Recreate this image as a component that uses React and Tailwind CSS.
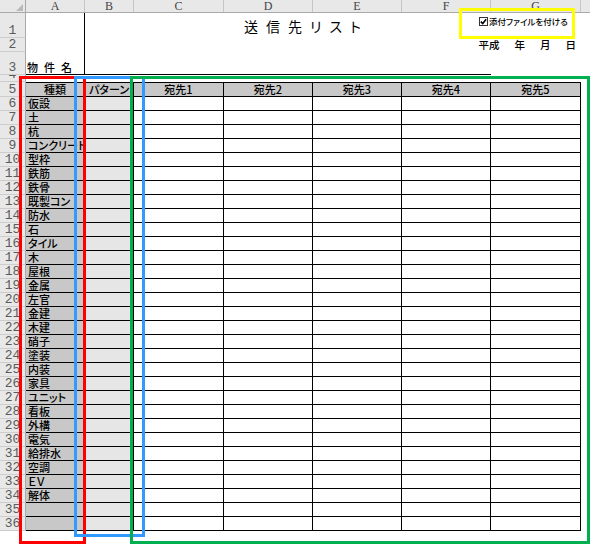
import React from "react";

const JP = "font-['Noto_Sans_CJK_JP',sans-serif] [font-feature-settings:'palt']";

const COLS = [
  { l: "A", w: "w-[59px]" },
  { l: "B", w: "w-[49px]" },
  { l: "C", w: "w-[90px]" },
  { l: "D", w: "w-[89px]" },
  { l: "E", w: "w-[89px]" },
  { l: "F", w: "w-[89px]" },
  { l: "G", w: "w-[90px]" },
];

const DEST = [
  { t: "宛先1", w: "w-[90px]" },
  { t: "宛先2", w: "w-[89px]" },
  { t: "宛先3", w: "w-[89px]" },
  { t: "宛先4", w: "w-[89px]" },
  { t: "宛先5", w: "w-[90px]" },
];

const KINDS = [
  "仮設", "土", "杭", "コンクリート", "型枠", "鉄筋", "鉄骨", "既製コン", "防水", "石",
  "タイル", "木", "屋根", "金属", "左官", "金建", "木建", "硝子", "塗装", "内装",
  "家具", "ユニット", "看板", "外構", "電気", "給排水", "空調", "ＥＶ", "解体", "", "",
];

const Row = ({ n, h, children }) => (
  <div className={`flex ${h}`}>
    <div className="w-[26px] shrink-0 flex items-end justify-center overflow-hidden border-r border-b border-r-[#a9a9a9] border-b-[#cdcdcd] bg-[#e8e8e8] font-['Liberation_Mono',monospace] text-[13px] leading-[12px] text-[#5a5a5a]">
      {n}
    </div>
    {children}
  </div>
);

const TableRow = ({ n, a, header }) => {
  const edge = header ? "border-t border-b border-r border-black" : "border-b border-r border-black";
  return (
    <Row n={n} h={header ? "h-[15px]" : "h-[14px]"}>
      <div
        className={`w-[59px] shrink-0 flex items-center overflow-hidden whitespace-nowrap bg-[#c8c8c8] text-[11px] font-medium leading-[13px] ${edge} ${header ? "justify-center" : "pl-[2px]"}`}
      >
        {a}
      </div>
      <div
        className={`w-[49px] shrink-0 flex items-center justify-center text-[11px] font-medium leading-[13px] ${edge} ${header ? "bg-[#c8c8c8]" : "bg-[#e6e6e6]"}`}
      >
        {header ? "パターン" : ""}
      </div>
      {DEST.map((d) => (
        <div
          key={d.t}
          className={`${d.w} shrink-0 flex items-center justify-center text-[11px] font-medium leading-[13px] ${edge} ${header ? "bg-[#c8c8c8]" : "bg-white"}`}
        >
          {header ? d.t : ""}
        </div>
      ))}
    </Row>
  );
};

export default function App() {
  return (
    <div className={`relative w-[590px] h-[545px] overflow-hidden bg-white text-black ${JP}`}>
      {/* column letters */}
      <div className="flex h-[13px] bg-[#e8e8e8] border-b border-[#a9a9a9]">
        <div className="relative w-[26px] shrink-0 border-r border-[#a9a9a9]">
          <div className="absolute right-[2px] bottom-[1px] w-0 h-0 border-l-[7px] border-l-transparent border-b-[7px] border-b-[#b9b9b9]" />
        </div>
        {COLS.map((c) => (
          <div
            key={c.l}
            className={`${c.w} shrink-0 flex items-center justify-center border-r border-[#c6c6c6] font-['Liberation_Serif',serif] text-[12px] leading-none text-[#444]`}
          >
            {c.l}
          </div>
        ))}
        <div className="flex-1" />
      </div>

      {/* row 1: title */}
      <Row n="1" h="h-[25px]">
        <div className="grid grid-cols-[59px_496px]">
          <div className="col-start-1 row-start-1 border-r border-black" />
          <div className="col-start-1 col-span-2 row-start-1 flex items-center justify-center pt-[1px] text-[14px] leading-none tracking-[8px] pl-[6px]">
            送信先リスト
          </div>
        </div>
      </Row>

      {/* row 2: date */}
      <Row n="2" h="h-[14px]">
        <div className="w-[59px] shrink-0 border-r border-black" />
        <div className="w-[496px] shrink-0 flex items-center justify-end gap-[15px] pr-[5px] text-[10.5px] font-medium leading-none">
          <span>平成</span>
          <span>年</span>
          <span>月</span>
          <span>日</span>
        </div>
      </Row>

      {/* row 3: property name */}
      <Row n="3" h="h-[23px]">
        <div className="w-[59px] shrink-0 flex items-end pl-[1px] pb-[1px] border-r border-b border-black text-[11px] font-medium leading-none tracking-[6px]">
          物件名
        </div>
        <div className="w-[406px] shrink-0 border-b border-black" />
      </Row>

      {/* row 4 */}
      <Row n="4" h="h-[7px]">
        <div className="w-[59px] shrink-0" />
      </Row>

      <TableRow n="5" a="種類" header />
      {KINDS.map((k, i) => (
        <TableRow key={i} n={String(i + 6)} a={k} />
      ))}

      {/* attachment checkbox (form control) */}
      <label className="absolute left-[479px] top-[17px] flex items-center gap-[1px] text-[8.5px] font-medium leading-none">
        <span className="w-[9px] h-[9px] flex items-center justify-center border border-[#333] bg-white">
          <svg width="7" height="7" viewBox="0 0 7 7">
            <path d="M0.8 3.6 L2.7 5.5 L6.2 1.2" fill="none" stroke="#000" strokeWidth="1.6" />
          </svg>
        </span>
        添付ファイルを付ける
      </label>

      {/* annotation frames */}
      <div className="absolute left-[19px] top-[76px] w-[67px] h-[468px] border-[3px] border-[#ff0000]" />
      <div className="absolute left-[74px] top-[76px] w-[71px] h-[461px] border-[3px] border-[#3399ff]" />
      <div className="absolute left-[130px] top-[76px] w-[460px] h-[468px] border-[3px] border-[#00b050]" />
      <div className="absolute left-[459px] top-[8px] w-[116px] h-[31px] border-[3px] border-[#ffff00]" />
    </div>
  );
}
